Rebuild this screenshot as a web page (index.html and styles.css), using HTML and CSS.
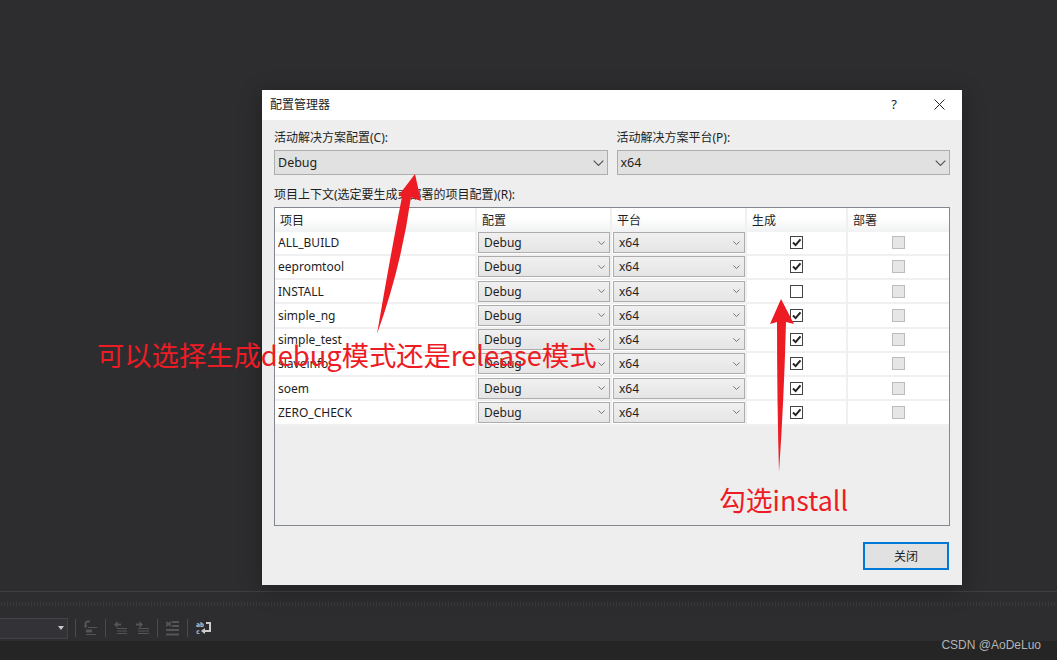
FILE: index.html
```html
<!DOCTYPE html>
<html lang="zh-CN">
<head>
    <meta charset="UTF-8">
    <title>配置管理器</title>
    <link rel="stylesheet" href="styles.css">
</head>
<body>
    <svg class="defs" width="0" height="0">
        <symbol id="chev" viewBox="0 0 9 5"><path d="M.5.5l4 4 4-4" fill="none" stroke="#555" stroke-width="1"/></symbol>
        <symbol id="tick" viewBox="0 0 13 13"><path d="M3 6.500l2.600 2.600L10.500 3.300" fill="none" stroke="#222" stroke-width="2"/></symbol>
    </svg>

    <div class="ide">
        <div class="workspace"></div>
        <div class="grip"><div class="dots"></div></div>
        <div class="toolbar">
            <div class="tool-select"><span class="tool-caret"></span></div>
            <span class="tool-sep"></span>
            <svg class="tool-icon" width="13" height="16" viewBox="0 0 13 16"><path d="M1.500 7V3.500A2 2 0 0 1 3.500 1.500H6" fill="none" stroke="#555" stroke-width="2"/><path d="M0 5.500h3.500L1.700 8.500z" fill="#555"/><path d="M4 7.500h9M2 14.500h10" fill="none" stroke="#555"/><path d="M2 9.500h6v3H2z" fill="#555"/></svg>
            <span class="tool-sep"></span>
            <svg class="tool-icon" width="13" height="14" viewBox="0 0 13 14"><path d="M0 3.500L3.500 0v2.500H7v2H3.500V7zM3 7h10v1H3zM3 9.500h10v1H3zM3 12h10v1H3z" fill="#555"/></svg>
            <svg class="tool-icon tool-icon-next" width="13" height="14" viewBox="0 0 13 14"><path d="M7 3.500L3.500 0v2.500H0v2h3.500V7zM2 7h11v1H2zM2 9.500h11v1H2zM2 12h11v1H2z" fill="#555"/></svg>
            <span class="tool-sep"></span>
            <svg class="tool-icon" width="13" height="15" viewBox="0 0 13 15"><path d="M0 1l5 4M5 1L0 5" stroke="#555" stroke-width="2"/><path d="M6 0h7v2H6zM6 4h7v2H6zM0 8h13v2H0zM0 12.500h13v2H0z" fill="#555"/></svg>
            <span class="tool-sep"></span>
            <svg class="tool-icon" width="15" height="15" viewBox="0 0 15 15"><text class="icon-letters" x="0" y="6">ab</text><text class="icon-letters" x="0" y="13">c</text><path d="M10 2h4v8H9" fill="none" stroke="#ccc" stroke-width="2"/><path d="M5 10l4-3v6z" fill="#ccc"/></svg>
        </div>
        <div class="statusbar"><span class="watermark">CSDN @AoDeLuo</span></div>
    </div>

    <div class="dialog">
        <div class="titlebar">
            <span class="title">配置管理器</span>
            <span class="help">?</span>
            <svg class="close-x" width="11" height="11" viewBox="0 0 11 11"><path d="M.5.5l10 10M10.500.5l-10 10" stroke="#222" stroke-width="1"/></svg>
        </div>
        <div class="dialog-body">
            <div class="top-fields">
                <div class="field">
                    <label>活动解决方案配置(C):</label>
                    <div class="combo"><span>Debug</span><svg width="11" height="6"><use href="#chev"/></svg></div>
                </div>
                <div class="field">
                    <label>活动解决方案平台(P):</label>
                    <div class="combo"><span>x64</span><svg width="11" height="6"><use href="#chev"/></svg></div>
                </div>
            </div>
            <div class="grid-label">项目上下文(选定要生成或部署的项目配置)(R):</div>
            <div class="grid-frame">
                <div class="row head">
                    <div class="cell">项目</div>
                    <div class="cell">配置</div>
                    <div class="cell">平台</div>
                    <div class="cell">生成</div>
                    <div class="cell">部署</div>
                </div>
                <div class="row">
                    <div class="cell name">ALL_BUILD</div>
                    <div class="cell"><div class="cell-combo"><span>Debug</span><svg width="7" height="4"><use href="#chev"/></svg></div></div>
                    <div class="cell"><div class="cell-combo"><span>x64</span><svg width="7" height="4"><use href="#chev"/></svg></div></div>
                    <div class="cell mid"><span class="check"><svg width="13" height="13"><use href="#tick"/></svg></span></div>
                    <div class="cell mid"><span class="check off"></span></div>
                </div>
                <div class="row">
                    <div class="cell name">eepromtool</div>
                    <div class="cell"><div class="cell-combo"><span>Debug</span><svg width="7" height="4"><use href="#chev"/></svg></div></div>
                    <div class="cell"><div class="cell-combo"><span>x64</span><svg width="7" height="4"><use href="#chev"/></svg></div></div>
                    <div class="cell mid"><span class="check"><svg width="13" height="13"><use href="#tick"/></svg></span></div>
                    <div class="cell mid"><span class="check off"></span></div>
                </div>
                <div class="row">
                    <div class="cell name">INSTALL</div>
                    <div class="cell"><div class="cell-combo"><span>Debug</span><svg width="7" height="4"><use href="#chev"/></svg></div></div>
                    <div class="cell"><div class="cell-combo"><span>x64</span><svg width="7" height="4"><use href="#chev"/></svg></div></div>
                    <div class="cell mid"><span class="check"></span></div>
                    <div class="cell mid"><span class="check off"></span></div>
                </div>
                <div class="row">
                    <div class="cell name">simple_ng</div>
                    <div class="cell"><div class="cell-combo"><span>Debug</span><svg width="7" height="4"><use href="#chev"/></svg></div></div>
                    <div class="cell"><div class="cell-combo"><span>x64</span><svg width="7" height="4"><use href="#chev"/></svg></div></div>
                    <div class="cell mid"><span class="check"><svg width="13" height="13"><use href="#tick"/></svg></span></div>
                    <div class="cell mid"><span class="check off"></span></div>
                </div>
                <div class="row">
                    <div class="cell name">simple_test</div>
                    <div class="cell"><div class="cell-combo"><span>Debug</span><svg width="7" height="4"><use href="#chev"/></svg></div></div>
                    <div class="cell"><div class="cell-combo"><span>x64</span><svg width="7" height="4"><use href="#chev"/></svg></div></div>
                    <div class="cell mid"><span class="check"><svg width="13" height="13"><use href="#tick"/></svg></span></div>
                    <div class="cell mid"><span class="check off"></span></div>
                </div>
                <div class="row">
                    <div class="cell name">slaveinfo</div>
                    <div class="cell"><div class="cell-combo"><span>Debug</span><svg width="7" height="4"><use href="#chev"/></svg></div></div>
                    <div class="cell"><div class="cell-combo"><span>x64</span><svg width="7" height="4"><use href="#chev"/></svg></div></div>
                    <div class="cell mid"><span class="check"><svg width="13" height="13"><use href="#tick"/></svg></span></div>
                    <div class="cell mid"><span class="check off"></span></div>
                </div>
                <div class="row">
                    <div class="cell name">soem</div>
                    <div class="cell"><div class="cell-combo"><span>Debug</span><svg width="7" height="4"><use href="#chev"/></svg></div></div>
                    <div class="cell"><div class="cell-combo"><span>x64</span><svg width="7" height="4"><use href="#chev"/></svg></div></div>
                    <div class="cell mid"><span class="check"><svg width="13" height="13"><use href="#tick"/></svg></span></div>
                    <div class="cell mid"><span class="check off"></span></div>
                </div>
                <div class="row">
                    <div class="cell name">ZERO_CHECK</div>
                    <div class="cell"><div class="cell-combo"><span>Debug</span><svg width="7" height="4"><use href="#chev"/></svg></div></div>
                    <div class="cell"><div class="cell-combo"><span>x64</span><svg width="7" height="4"><use href="#chev"/></svg></div></div>
                    <div class="cell mid"><span class="check"><svg width="13" height="13"><use href="#tick"/></svg></span></div>
                    <div class="cell mid"><span class="check off"></span></div>
                </div>
            </div>
            <div class="dialog-foot"><button class="close-btn">关闭</button></div>
        </div>
    </div>

    <!-- red annotations drawn on top of the screenshot -->
    <svg class="arrows" width="1057" height="660" viewBox="0 0 1057 660">
        <path d="M415 174L421 201 411 197Q401 268 377 334 391 252 402 197L399 195Z" fill="#ed1c24"/>
        <path d="M781 299L794 324 786 322Q784 400 779 472 777 400 777 322L770 324Z" fill="#ed1c24"/>
    </svg>
    <div class="note note-debug">可以选择生成debug模式还是release模式</div>
    <div class="note note-install">勾选install</div>
</body>
</html>
```

FILE: styles.css
```css
* {
    box-sizing: border-box;
}
html, body {
    margin: 0;
    height: 660px;
    overflow: hidden;
}
body {
    position: relative;
    background: #2d2d30;
    font-family: "Noto Sans", "Noto Sans CJK SC", sans-serif;
    font-size: 12px;
    color: #1e1e1e;
}
.defs {
    position: absolute;
}
.ide {
    display: flex;
    flex-direction: column;
    height: 660px;
}
.workspace {
    flex: 0 0 592px;
    border-bottom: 1px solid #3f3f42;
}
.grip {
    flex: 0 0 23px;
    padding-top: 10px;
}
.dots {
    height: 4px;
    background-image: radial-gradient(#46464a 0.7px, transparent 0.8px);
    background-size: 3px 2px;
}
.toolbar {
    flex: 0 0 26px;
    display: flex;
    align-items: center;
}
.tool-select {
    width: 68px;
    height: 21px;
    border: 1px solid #434346;
    border-left: 0;
    background: #333337;
    display: flex;
    align-items: center;
    justify-content: flex-end;
    padding-right: 2px;
    margin-right: 3px;
}
.tool-caret {
    width: 0;
    height: 0;
    border: 3px solid transparent;
    border-top: 4px solid #c8c8c8;
    border-bottom: 0;
    margin-right: 1px;
}
.tool-sep {
    width: 1px;
    height: 18px;
    margin: 0 4px;
    background: #4a4a4d;
}
.tool-icon {
    margin: 0 4px;
}
.tool-icon-next {
    margin-left: 5px;
}
.icon-letters {
    font-family: "DejaVu Sans Mono", monospace;
    font-size: 6.500px;
    font-weight: bold;
    fill: #ccc;
}
.statusbar {
    flex: 1;
    background: #252526;
    display: flex;
    justify-content: flex-end;
    padding: 0 16px 0 0;
}
.watermark {
    font-family: "Liberation Sans", sans-serif;
    font-size: 12px;
    line-height: 10px;
    margin-top: -1px;
    color: #b4b4b4;
}

.dialog {
    position: absolute;
    left: 262px;
    top: 90px;
    width: 700px;
    height: 495px;
    background: #eeeeee;
    box-shadow: 0 4px 22px rgba(0, 0, 0, 0.3);
    display: flex;
    flex-direction: column;
}
.titlebar {
    flex: 0 0 30px;
    background: #fff;
    display: flex;
    align-items: center;
    padding: 0 0 2px 8px;
}
.title {
    flex: 1;
}
.help {
    font-size: 13px;
    margin-right: 37px;
}
.close-x {
    margin-right: 17px;
}
.dialog-body {
    flex: 1;
    padding: 9px 12px 0;
    display: flex;
    flex-direction: column;
}
.top-fields {
    display: flex;
    gap: 9px;
}
.field {
    flex: 1;
    display: flex;
    flex-direction: column;
}
.field label {
    line-height: 17px;
    margin-bottom: 4px;
}
.combo {
    height: 25px;
    border: 1px solid #adadad;
    background: #e1e1e1;
    display: flex;
    align-items: center;
    justify-content: space-between;
    padding: 0 3px 0 3px;
    font-size: 12.500px;
}
.grid-label {
    line-height: 17px;
    margin-top: 11px;
    margin-bottom: 4px;
}
.grid-frame {
    height: 319px;
    border: 1px solid #828790;
}
.row {
    display: grid;
    grid-template-columns: 202px 135px 135px 101px 101px;
    height: 24.250px;
    background: #fff;
    border-bottom: 2px solid #f0f0f0;
}
.row.head {
    height: 23.600px;
    border-bottom: 0;
    background: linear-gradient(#fff, #fff 40%, #f1f2f3);
}
.cell {
    border-right: 2px solid #f0f0f0;
    display: flex;
    align-items: center;
    min-width: 0;
    padding-left: 1px;
}
.cell:last-child {
    border-right: 0;
}
.row.head .cell {
    padding-left: 5px;
}
.cell.name {
    padding-left: 3px;
}
.cell.mid {
    justify-content: center;
    padding: 0;
}
.cell-combo {
    width: 132px;
    height: 21px;
    border: 1px solid #adadad;
    background: linear-gradient(#f0f0f0, #e5e5e5);
    display: flex;
    align-items: center;
    justify-content: space-between;
    padding: 0 4px 0 5px;
}
.check {
    width: 13px;
    height: 13px;
    border: 1px solid #444;
    background: #fff;
    position: relative;
    display: block;
}
.check svg {
    position: absolute;
    left: -1px;
    top: -1px;
}
.check.off {
    border-color: #bcbcbc;
    background: #e6e6e6;
}
.dialog-foot {
    display: flex;
    justify-content: flex-end;
    padding-top: 16px;
}
.close-btn {
    width: 86px;
    height: 28px;
    margin-right: 1px;
    border: 2px solid #0078d7;
    background: #e1e1e1;
    font: inherit;
    color: inherit;
    padding: 0;
}

.arrows {
    position: absolute;
    left: 0;
    top: 0;
}
.note {
    position: absolute;
    color: #ed1c24;
    font-family: "Noto Sans CJK SC", sans-serif;
    font-size: 27.300px;
    line-height: 32px;
    white-space: nowrap;
}
.note-debug {
    left: 97px;
    top: 338px;
}
.note-install {
    left: 719px;
    top: 484px;
    font-size: 26.800px;
}
```
